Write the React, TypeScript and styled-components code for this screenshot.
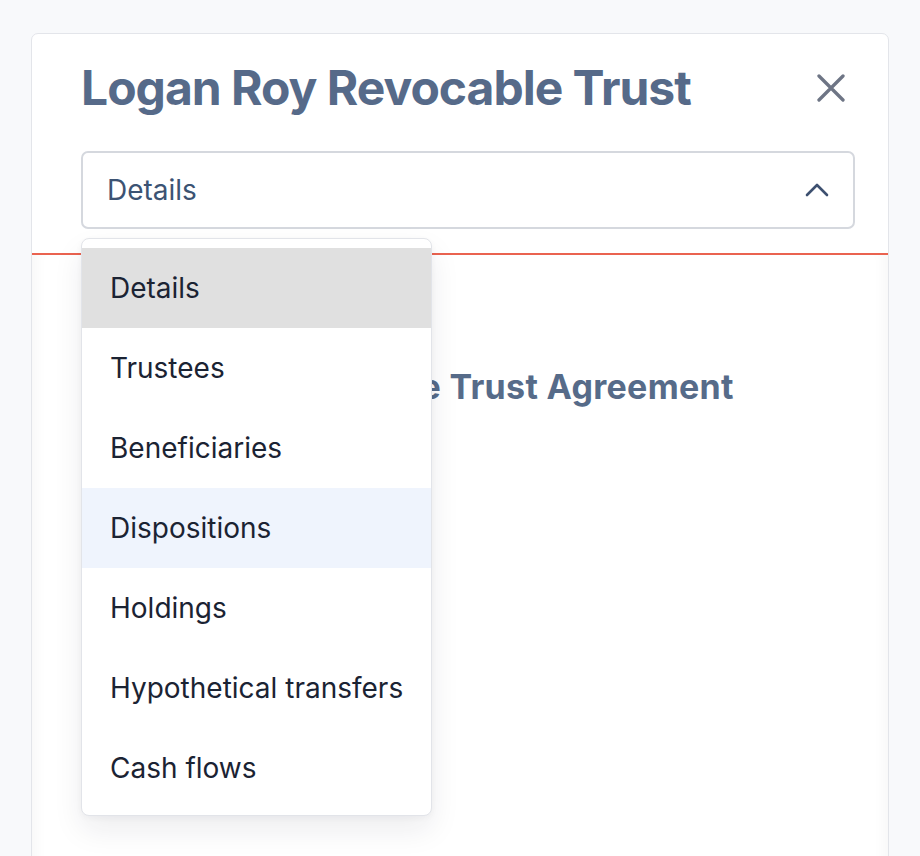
import React from "react";
import styled, { createGlobalStyle } from "styled-components";

const GlobalStyle = createGlobalStyle`
  html, body {
    margin: 0;
    padding: 0;
    background: #f8f9fb;
  }
  body {
    font-family: Inter, "Noto Sans", sans-serif;
    -webkit-font-smoothing: antialiased;
  }
`;

const Page = styled.div`
  height: 856px;
  overflow: hidden;
  padding: 33px 31px 0 31px;
  box-sizing: border-box;
`;

const Card = styled.div`
  width: 858px;
  min-height: 900px;
  box-sizing: border-box;
  background: #ffffff;
  border: 1px solid #e3e5ea;
  border-radius: 7px;
  display: flex;
  flex-direction: column;
`;

const Header = styled.div`
  padding: 24px 33px 24px 49px;
  display: flex;
  flex-direction: column;
  gap: 33px;
`;

const TitleRow = styled.div`
  display: flex;
  align-items: center;
  justify-content: space-between;
`;

const Title = styled.h1`
  margin: 0;
  font-size: 48px;
  line-height: 60px;
  font-weight: 700;
  color: #566a89;
  letter-spacing: -1px;
`;

const CloseButton = styled.button`
  border: 0;
  background: none;
  padding: 0;
  margin-right: 10px;
  width: 28px;
  height: 28px;
  display: flex;
  align-items: center;
  justify-content: center;
  color: #6e7585;
  cursor: pointer;
`;

const SelectWrap = styled.div`
  position: relative;
`;

const SelectBox = styled.div`
  height: 78px;
  box-sizing: border-box;
  border: 2px solid #d5d8de;
  border-radius: 7px;
  display: flex;
  align-items: center;
  justify-content: space-between;
  padding: 0 24px 0 24px;
  font-size: 28px;
  color: #3c5373;
`;

const Menu = styled.ul`
  position: absolute;
  top: 87px;
  left: 0;
  width: 351px;
  box-sizing: border-box;
  margin: 0;
  padding: 9px 0 7px;
  list-style: none;
  background: #ffffff;
  border: 1px solid #e2e4e9;
  border-radius: 8px;
  box-shadow: 0 14px 30px rgba(20, 30, 50, 0.08), 0 2px 6px rgba(20, 30, 50, 0.04);
  z-index: 10;
`;

const MenuItem = styled.li<{ $state?: "selected" | "hover" }>`
  height: 80px;
  display: flex;
  align-items: center;
  padding-left: 28px;
  font-size: 28px;
  color: #1b2333;
  background: ${(p) =>
    p.$state === "selected" ? "#e0e0e0" : p.$state === "hover" ? "#eff4fd" : "transparent"};
`;

const Body = styled.div`
  flex: 1;
  border-top: 2px solid #ea6350;
  padding: 111px 49px 0;
  box-shadow: inset 14px 0 14px -10px rgba(0, 0, 0, 0.035),
    inset -14px 0 14px -10px rgba(0, 0, 0, 0.035);
`;

const Subtitle = styled.h2`
  margin: 0;
  font-size: 34px;
  line-height: 42px;
  font-weight: 700;
  color: #566b89;
  letter-spacing: 0.3px;
`;

const sections = [
  "Details",
  "Trustees",
  "Beneficiaries",
  "Dispositions",
  "Holdings",
  "Hypothetical transfers",
  "Cash flows",
];

const CloseIcon = () => (
  <svg width="28" height="28" viewBox="0 0 28 28" fill="none">
    <path
      d="M2 2 L26 26 M26 2 L2 26"
      stroke="currentColor"
      strokeWidth="3.3"
      strokeLinecap="round"
    />
  </svg>
);

const ChevronUp = () => (
  <svg width="24" height="16" viewBox="0 0 24 16" fill="none">
    <path
      d="M2 13 L12 3 L22 13"
      stroke="#3d5070"
      strokeWidth="2.6"
      strokeLinecap="round"
      strokeLinejoin="round"
    />
  </svg>
);

export default function App() {
  return (
    <>
      <GlobalStyle />
      <Page>
        <Card>
          <Header>
            <TitleRow>
              <Title>Logan Roy Revocable Trust</Title>
              <CloseButton aria-label="Close">
                <CloseIcon />
              </CloseButton>
            </TitleRow>
            <SelectWrap>
              <SelectBox>
                <span>Details</span>
                <ChevronUp />
              </SelectBox>
              <Menu>
                {sections.map((s) => (
                  <MenuItem
                    key={s}
                    $state={s === "Details" ? "selected" : s === "Dispositions" ? "hover" : undefined}
                  >
                    {s}
                  </MenuItem>
                ))}
              </Menu>
            </SelectWrap>
          </Header>
          <Body>
            <Subtitle>Logan Roy Revocable Trust Agreement</Subtitle>
          </Body>
        </Card>
      </Page>
    </>
  );
}
